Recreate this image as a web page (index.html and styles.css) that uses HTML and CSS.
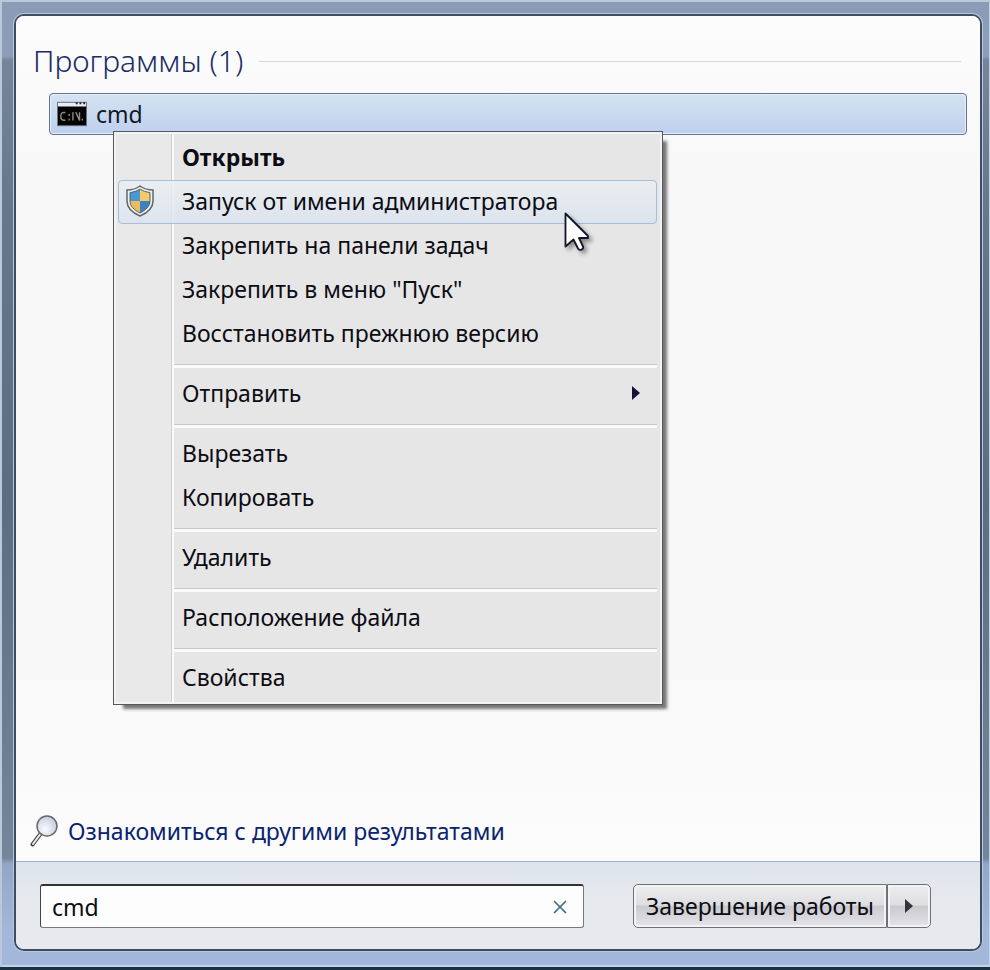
FILE: index.html
```
<!doctype html>
<html lang="ru">
  <head>
    <meta charset="utf-8">
    <title>Программы</title>
    <link rel="stylesheet" href="styles.css">
  </head>
  <body>
    <div class="start-menu">
      <main class="results">
        <h1 class="group-title">Программы (1)</h1>
        <div class="result">
          <a class="result-link" href="#cmd">
            <svg class="result-icon" width="30" height="26" viewBox="0 0 32 26">
              <rect x="0.5" y="0.5" width="31" height="25" fill="#050505" stroke="#66717f"/>
              <rect x="1" y="1" width="30" height="4" fill="#e8eef6"/>
              <path d="M20 1.500h2M24 1.500h2M28 1.500h2" stroke="#222" stroke-width="2"/>
              <path d="M9 11.500q-5-1-5 4t5 4M13 13v2M13 18v2M17 11v9M20 11l4 9v-9M27 18v2" fill="none" stroke="#8d8c80" stroke-width="1.500"/>
            </svg>
            <span>cmd</span>
          </a>
          <ul class="menu">
            <li><button class="menu-item menu-item-default">Открыть</button></li>
            <li>
              <button class="menu-item menu-item-hover">
                <svg class="shield" width="28" height="32" viewBox="0 0 28 32">
                  <path d="M14 1C10 4 5 5 1 5v11c0 7 6 12 13 15 7-3 13-8 13-15V5c-4 0-9-1-13-4z" fill="#f5f3e8" stroke="#5d6873" stroke-width="1.500"/>
                  <path d="M14 4v12H4V7.500C8 7 11 6 14 4z" fill="#4a97d6"/>
                  <path d="M14 4c3 2 6 3 10 3.500V16H14z" fill="#f3ca69"/>
                  <path d="M4 16h10v12C8 25 4 21 4 16z" fill="#edbd5b"/>
                  <path d="M14 16h10c0 5-4 9-10 12z" fill="#3c82c4"/>
                  <path d="M14 4C11 6 8 7 4 7.500V16c0 5 4 9 10 12 6-3 10-7 10-12V7.500C20 7 17 6 14 4z" fill="none" stroke="#4d6170"/>
                </svg>
                Запуск от имени администратора
              </button>
            </li>
            <li><button class="menu-item">Закрепить на панели задач</button></li>
            <li><button class="menu-item">Закрепить в меню "Пуск"</button></li>
            <li><button class="menu-item">Восстановить прежнюю версию</button></li>
            <li class="separator"></li>
            <li>
              <button class="menu-item menu-item-sub">
                Отправить
                <svg width="8" height="16" viewBox="0 0 8 16"><path d="M0 1l8 7-8 7z" fill="#16103a"/></svg>
              </button>
            </li>
            <li class="separator"></li>
            <li><button class="menu-item">Вырезать</button></li>
            <li><button class="menu-item">Копировать</button></li>
            <li class="separator"></li>
            <li><button class="menu-item">Удалить</button></li>
            <li class="separator"></li>
            <li><button class="menu-item">Расположение файла</button></li>
            <li class="separator"></li>
            <li><button class="menu-item">Свойства</button></li>
          </ul>
          <svg class="pointer" width="28" height="40" viewBox="0 0 28 40">
            <path d="M1.500 1.500v33l8-7 4.500 9c1.500 2.500 6 1 5-2l-4-8.500h9v-2z" fill="#fff" stroke="#11142a" stroke-width="1.800" stroke-linejoin="round"/>
          </svg>
        </div>
        <a class="more" href="#more">
          <svg width="28" height="32" viewBox="0 0 28 32">
            <defs>
              <radialGradient id="lens" cx="0.4" cy="0.65" r="0.7">
                <stop offset="0" stop-color="#fafbff"/>
                <stop offset="1" stop-color="#c3c8da"/>
              </radialGradient>
            </defs>
            <path d="M10 19.500L2.500 29.500" stroke="#444" stroke-width="4" stroke-linecap="round"/>
            <path d="M10 19.500L3 29" stroke="#eee" stroke-width="2" stroke-linecap="round"/>
            <circle cx="17" cy="11" r="10" fill="url(#lens)" stroke="#666a72" stroke-width="1.500"/>
          </svg>
          Ознакомиться с другими результатами
        </a>
      </main>
      <footer class="bar">
        <div class="search">
          <input class="search-input" type="text" value="cmd" aria-label="Поиск">
          <button class="search-clear" aria-label="Очистить">
            <svg width="14" height="14" viewBox="0 0 14 14"><path d="M1 1l12 12M13 1L1 13" stroke="#3f6c8c" stroke-width="1.700"/></svg>
          </button>
        </div>
        <div class="power">
          <button class="power-button">Завершение работы</button>
          <button class="power-button power-more" aria-label="Другие действия">
            <svg width="8" height="14" viewBox="0 0 8 14"><path d="M0 0l8 7-8 7z" fill="#34343a"/></svg>
          </button>
        </div>
      </footer>
    </div>
  </body>
</html>
```
FILE: styles.css
```
* {
  box-sizing: border-box;
}
body {
  display: flex;
  min-height: 100vh;
  margin: 0;
  padding: 14px 8px 16px 14px;
  font-family: "Noto Sans", "Open Sans", sans-serif;
  font-size: 23px;
  line-height: 32px;
  color: #0c0c14;
  border-bottom: 3px solid #1d3145;
  background: linear-gradient(#8b9ab5 0, #8f9eb8 56px, #76859a 60px, #68788c 200px, #5d6d80 500px, #75869c 858px, #92a6c6 864px, #a3b7da 930px);
  box-shadow: inset 2px 2px #bac8da, inset -1px -2px #c0d6e8;
}
button, input {
  margin: 0;
  font: inherit;
  color: inherit;
}
a {
  text-decoration: none;
}
svg {
  flex: none;
}

.start-menu {
  display: flex;
  flex: 1;
  flex-direction: column;
  border: 2px solid #3c4d64;
  border-radius: 10px;
  background: #e8e9ed;
  box-shadow: 0 0 0 1px #b9c7d9;
}
.results {
  display: flex;
  flex: 1;
  flex-direction: column;
  padding: 25px 13px 14px 17px;
  border-radius: 8px 8px 0 0;
  background: linear-gradient(#fcfcfc, #f8f8f8 150px, #f8f8f8 650px, #fcfcfc);
}
.group-title {
  display: flex;
  align-items: center;
  gap: 16px;
  margin: 0 6px 12px 0;
  font-size: 30px;
  font-weight: 300;
  line-height: 40px;
  color: #1b2d66;
}
.group-title::after {
  content: "";
  flex: 1;
  height: 1px;
  background: #d9d6d6;
}

.result {
  position: relative;
  margin-left: 16px;
}
.result-link {
  display: flex;
  align-items: center;
  gap: 9px;
  height: 42px;
  padding: 0 7px;
  border: 1px solid #62758e;
  border-radius: 4px;
  color: #111827;
  background: linear-gradient(#d5e3f1, #bdd0ee);
  box-shadow: inset 0 0 0 1px #e6f0fa;
}

.menu {
  position: absolute;
  top: 38px;
  left: 64px;
  width: 550px;
  margin: 0;
  padding: 4px 5px 4px 4px;
  list-style: none;
  border: 1px solid #55595f;
  background: linear-gradient(90deg, #e9e9e9 57px, #cfcfcf 57px, #cfcfcf 58px, #fafafa 58px, #fafafa 60px, #e7e6e6 60px);
  box-shadow: inset 0 0 0 2px #f3f3f3, 7px 7px 3px -3px #777;
}
.menu-item {
  display: flex;
  align-items: center;
  width: 100%;
  height: 44px;
  padding: 0 16px 2px 63px;
  border: 1px solid transparent;
  border-radius: 4px;
  text-align: left;
  background: none;
}
.menu-item-default {
  font-weight: bold;
}
.menu-item-hover {
  gap: 28px;
  padding-left: 7px;
  border-color: #a4bfda;
  background: linear-gradient(rgba(236, 240, 243, 0.8), rgba(218, 227, 239, 0.8));
}
.menu-item-sub {
  justify-content: space-between;
}
.separator {
  height: 16px;
  margin-left: 56px;
  padding-top: 8px;
}
.separator::before {
  content: "";
  display: block;
  height: 3px;
  border-top: 1px solid #c6c6c6;
  background: #fafafa;
}
.pointer {
  position: absolute;
  top: 119px;
  left: 515px;
  filter: drop-shadow(3px 3px 2px rgba(0, 0, 0, 0.4));
}

.more {
  display: flex;
  align-items: center;
  align-self: flex-start;
  gap: 10px;
  margin-top: auto;
  margin-left: -3px;
  color: #0a2370;
}

.bar {
  display: flex;
  gap: 49px;
  padding: 22px 49px 21px 24px;
  border-top: 1px solid #9fb4ca;
  border-radius: 0 0 8px 8px;
  background: linear-gradient(#dde4ed, #e8e9ed 40px);
}
.search {
  display: flex;
  flex: 1;
  height: 44px;
  border: 1px solid #777;
  border-top: 2px solid #333;
  border-left-color: #444;
  border-radius: 3px;
  background: #fdfdfd;
}
.search-input {
  flex: 1;
  min-width: 0;
  padding: 0 11px;
  border: 0;
  outline: 0;
  background: none;
}
.search-clear {
  display: flex;
  align-items: center;
  padding: 0 16px;
  border: 0;
  background: none;
}
.power {
  display: flex;
}
.power-button {
  height: 44px;
  padding: 0 12px;
  border: 1px solid #707078;
  border-radius: 5px 0 0 5px;
  background: linear-gradient(#eeeeef, #dedee1 48%, #c9c9ce 50%, #e5e5e9);
  box-shadow: inset 0 0 0 2px #f3f3f5;
}
.power-more {
  display: flex;
  align-items: center;
  padding: 0 17px;
  border-left-width: 1px;
  border-radius: 0 5px 5px 0;
}
```
